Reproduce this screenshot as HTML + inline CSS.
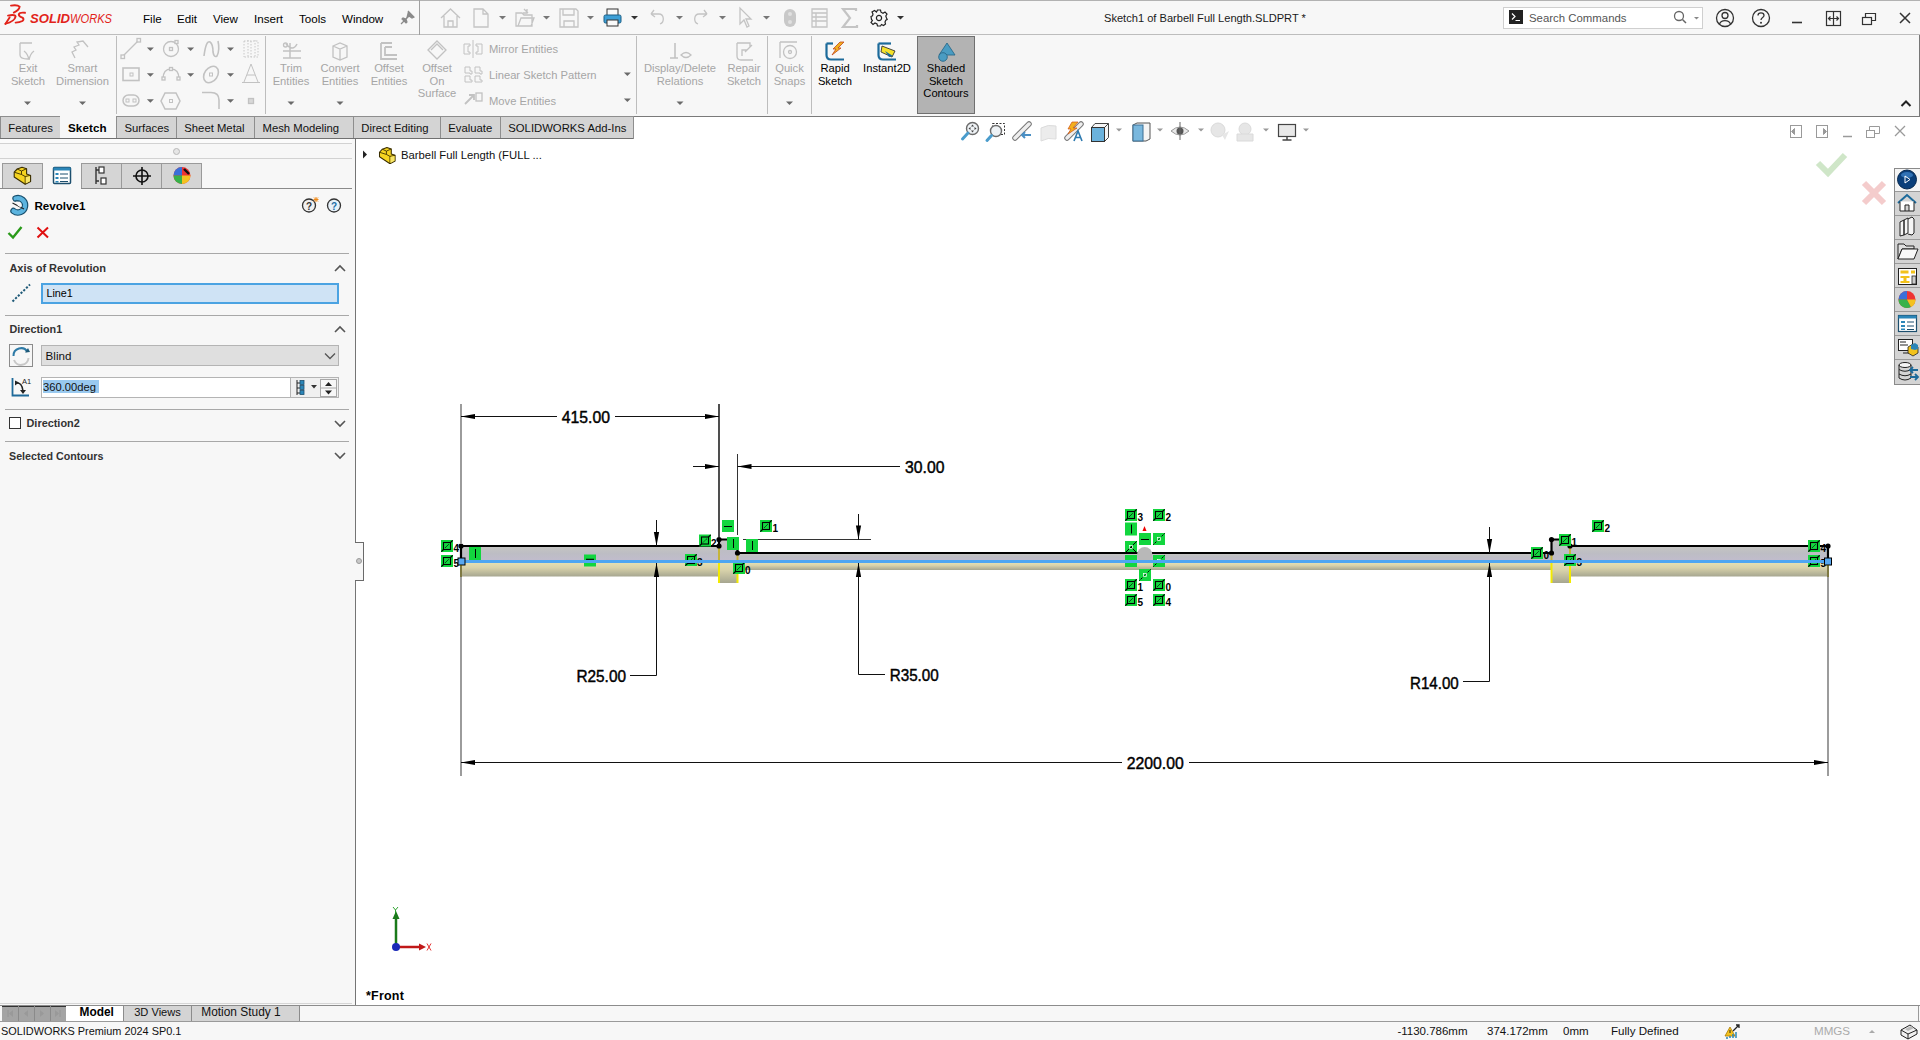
<!DOCTYPE html>
<html><head><meta charset="utf-8">
<style>
*{box-sizing:border-box;margin:0;padding:0}
html,body{width:1920px;height:1040px;overflow:hidden;background:#f7f7f7;font-family:"Liberation Sans",sans-serif;color:#1a1a1a}
.a{position:absolute}
.t{position:absolute;white-space:nowrap;line-height:1;font-size:11.2px}
.dis{color:#a8a8a8}
.ln{position:absolute;background:#c8c8c8}
</style></head><body>
<!-- TITLE BAR -->
<div class="a" style="left:0;top:0;width:1920px;height:35px;background:#f7f7f7;border-top:1px solid #b2b2b2;border-bottom:1px solid #bdbdbd"></div>

<!-- logo -->
<svg class="a" style="left:0;top:0" width="116" height="34" viewBox="0 0 116 34">
 <g fill="none" stroke="#e2231a" stroke-width="1.9" stroke-linecap="round">
  <path d="M11 5.6 Q17.5 4.6 19.6 6.6 Q19.2 10 13.8 12.6"/>
  <path d="M8 15.6 Q15 14 15.6 16.6 Q14.5 21.5 5.5 23.6"/>
  <path d="M9.6 17.4 L5.4 24"/>
  <path d="M25 12.8 Q19.5 12.2 18.8 14.4 Q18.8 16.4 22.4 17.6 Q24.6 19 22.4 21 Q19.5 22.6 15.6 22.6"/>
 </g>
 <text x="30" y="23" font-family="Liberation Sans" font-weight="bold" font-style="italic" font-size="12.6" fill="#e2231a" textLength="40" lengthAdjust="spacingAndGlyphs">SOLID</text>
 <text x="70" y="23" font-family="Liberation Sans" font-style="italic" font-size="12.6" fill="#e2231a" textLength="42" lengthAdjust="spacingAndGlyphs">WORKS</text>
</svg>
<div class="t" style="left:143px;top:13px;font-size:11.6px;color:#000">File</div>
<div class="t" style="left:177px;top:13px;font-size:11.6px;color:#000">Edit</div>
<div class="t" style="left:213px;top:13px;font-size:11.6px;color:#000">View</div>
<div class="t" style="left:254px;top:13px;font-size:11.6px;color:#000">Insert</div>
<div class="t" style="left:299px;top:13px;font-size:11.6px;color:#000">Tools</div>
<div class="t" style="left:342px;top:13px;font-size:11.6px;color:#000">Window</div>
<svg class="a" style="left:400px;top:10px" width="15" height="15" viewBox="0 0 15 15"><path d="M8 1 L14 7 L12 8 L9 6 L6 9 L7 12 L6 13 L2 9 L3 8 L6 9 M4 11 L1 14" fill="#8a8a8a" stroke="#8a8a8a" stroke-width="1.2"/></svg>
<div class="ln" style="left:419px;top:0px;width:1px;height:35px;background:#a0a0a0"></div>
<!-- quick access -->
<svg class="a" style="left:430px;top:2px" width="480" height="32" viewBox="430 2 480 32">
 <g fill="none" stroke="#c4c4c4" stroke-width="1.3">
  <path d="M441 18 L450.5 9 L460 18 M444 16 V27 H457 V16 M448 27 V21 H453 V27"/>
  <path d="M474 9 H483 L488 14 V27 H474 Z M483 9 V14 H488"/>
  <path d="M516 13 H522 L524 15 H532 V26 H516 Z M518 26 L521 18 H534 L531 26"/>
  <path d="M524 9 L528 13 M527 9 V13 H523"/>
  <path d="M560 9 H576 L578 11 V27 H560 Z M563 9 V15 H574 V9 M564 27 V21 H574 V27"/>
  <path d="M651 14 L654 10 M651 14 L655 17 M651 14 H659 C664 14 665 22 660 24"/>
  <path d="M707 14 L704 10 M707 14 L703 17 M707 14 H699 C694 14 693 22 698 24"/>
  <path d="M740 8 V24 L744 20 L747 27 L749 26 L746 19 L751 19 Z"/>
  <path d="M812 9 H827 V27 H812 Z M812 13 H827 M816 13 V27 M812 17 H827 M812 21 H827"/>
 </g>
 <rect x="784" y="9" width="12" height="18" rx="6" fill="#c8c8c8"/>
 <circle cx="790" cy="14" r="2" fill="#e0e0e0"/><circle cx="790" cy="22" r="2" fill="#e0e0e0"/>
 <path d="M856 11 V9 H843 L850 18 L843 27 H857 V25" fill="none" stroke="#c4c4c4" stroke-width="2.2"/>
 <!-- printer -->
 <rect x="607" y="9" width="11" height="7" fill="#fafafa" stroke="#333" stroke-width="1"/>
 <rect x="604" y="15" width="17" height="8" rx="1.5" fill="#3d9fd6" stroke="#1b5f86" stroke-width="1"/>
 <rect x="607" y="20" width="11" height="6" fill="#fafafa" stroke="#333" stroke-width="1"/>
 <!-- gear -->
 <g transform="translate(879 18)" fill="none" stroke="#222" stroke-width="1.2">
  <path d="M-1.5 -8 H1.5 L2 -5.8 L4 -4.8 L6 -6 L8 -4 L6.8 -2 L7.5 0 L8.2 1.5 L6.8 2.2 L6 4 L6.5 6 L4.5 7.5 L2.5 6.5 L1.5 8 H-1.5 L-2 6 L-4 5 L-6 6.5 L-8 4.5 L-6.6 2.5 L-7.5 1.5 L-8 -1.5 L-6.5 -2.2 L-6 -4 L-7 -6 L-4.5 -7.5 L-2.5 -6 Z"/>
  <circle r="2.6"/>
 </g>
 <g fill="#777">
  <path d="M499 16 H506 L502.5 19.5 Z"/><path d="M543 16 H550 L546.5 19.5 Z"/><path d="M587 16 H594 L590.5 19.5 Z"/>
  <path d="M676 16 H683 L679.5 19.5 Z"/><path d="M719 16 H726 L722.5 19.5 Z"/><path d="M763 16 H770 L766.5 19.5 Z"/>
 </g>
 <g fill="#333"><path d="M631 16 H638 L634.5 19.5 Z"/><path d="M897 16 H904 L900.5 19.5 Z"/></g>
</svg>
<div class="t" style="left:1104px;top:13px;font-size:11.1px">Sketch1 of Barbell Full Length.SLDPRT *</div>
<!-- search -->
<div class="a" style="left:1503px;top:7px;width:200px;height:22px;background:#fff;border:1px solid #cfcfcf"></div>
<div class="a" style="left:1509px;top:10px;width:14px;height:14px;background:#222"></div>
<svg class="a" style="left:1509px;top:10px" width="14" height="14"><path d="M3 3.5 L6 6.5 L3 9.5 M6.5 10.5 H11" stroke="#fff" stroke-width="1.2" fill="none"/></svg>
<div class="t" style="left:1529px;top:13px;font-size:11.4px;color:#555">Search Commands</div>
<svg class="a" style="left:1672px;top:9px" width="30" height="18"><circle cx="7" cy="7" r="4.5" fill="none" stroke="#666" stroke-width="1.3"/><path d="M10.5 10.5 L14 14" stroke="#666" stroke-width="1.5"/><path d="M22 8 H27 L24.5 10.5 Z" fill="#888"/></svg>
<svg class="a" style="left:1712px;top:6px" width="210" height="24" viewBox="1712 6 210 24">
 <g fill="none" stroke="#333" stroke-width="1.3">
  <circle cx="1725" cy="18" r="8.5"/><circle cx="1725" cy="15.5" r="3"/><path d="M1719.5 24 C1721 19.5 1729 19.5 1730.5 24"/>
  <circle cx="1761" cy="18" r="8.5"/>
  <path d="M1758 15.5 C1758 12 1764 12 1764 15.5 C1764 17.5 1761 17.5 1761 20"/>
 </g>
 <circle cx="1761" cy="22.8" r="1" fill="#333"/>
 <path d="M1792 22.5 H1802" stroke="#333" stroke-width="1.6"/>
 <g fill="none" stroke="#333" stroke-width="1.2">
  <rect x="1826.5" y="11.5" width="14" height="14"/><path d="M1833.5 11.5 V25.5 M1828.5 18.5 H1838.5 M1830.5 16.5 L1828.5 18.5 L1830.5 20.5 M1836.5 16.5 L1838.5 18.5 L1836.5 20.5"/>
  <rect x="1862.5" y="17.5" width="9" height="7"/><path d="M1865.5 17.5 V13.5 H1875.5 V20.5 H1871.5"/>
  <path d="M1900 13 L1910 23 M1910 13 L1900 23" stroke-width="1.5"/>
 </g>
</svg>

<!-- RIBBON -->
<div class="a" style="left:0;top:35px;width:1920px;height:81px;background:#f7f7f7;border-right:1px solid #777"></div>
<!-- ribbon content -->
<div class="t" style="left:-72.0px;width:200px;text-align:center;top:63px;font-size:11.2px;color:#a6a6a6">Exit</div>
<div class="t" style="left:-72.0px;width:200px;text-align:center;top:76px;font-size:11.2px;color:#a6a6a6">Sketch</div>
<div class="t" style="left:-17.5px;width:200px;text-align:center;top:63px;font-size:11.2px;color:#a6a6a6">Smart</div>
<div class="t" style="left:-17.5px;width:200px;text-align:center;top:76px;font-size:11.2px;color:#a6a6a6">Dimension</div>
<div class="t" style="left:191.0px;width:200px;text-align:center;top:63px;font-size:11.2px;color:#a6a6a6">Trim</div>
<div class="t" style="left:191.0px;width:200px;text-align:center;top:76px;font-size:11.2px;color:#a6a6a6">Entities</div>
<div class="t" style="left:240.0px;width:200px;text-align:center;top:63px;font-size:11.2px;color:#a6a6a6">Convert</div>
<div class="t" style="left:240.0px;width:200px;text-align:center;top:76px;font-size:11.2px;color:#a6a6a6">Entities</div>
<div class="t" style="left:289.0px;width:200px;text-align:center;top:63px;font-size:11.2px;color:#a6a6a6">Offset</div>
<div class="t" style="left:289.0px;width:200px;text-align:center;top:76px;font-size:11.2px;color:#a6a6a6">Entities</div>
<div class="t" style="left:337.0px;width:200px;text-align:center;top:63px;font-size:11.2px;color:#a6a6a6">Offset</div>
<div class="t" style="left:337.0px;width:200px;text-align:center;top:76px;font-size:11.2px;color:#a6a6a6">On</div>
<div class="t" style="left:337.0px;width:200px;text-align:center;top:88px;font-size:11.2px;color:#a6a6a6">Surface</div>
<div class="t" style="left:580.0px;width:200px;text-align:center;top:63px;font-size:11.2px;color:#a6a6a6">Display/Delete</div>
<div class="t" style="left:580.0px;width:200px;text-align:center;top:76px;font-size:11.2px;color:#a6a6a6">Relations</div>
<div class="t" style="left:644.0px;width:200px;text-align:center;top:63px;font-size:11.2px;color:#a6a6a6">Repair</div>
<div class="t" style="left:644.0px;width:200px;text-align:center;top:76px;font-size:11.2px;color:#a6a6a6">Sketch</div>
<div class="t" style="left:689.5px;width:200px;text-align:center;top:63px;font-size:11.2px;color:#a6a6a6">Quick</div>
<div class="t" style="left:689.5px;width:200px;text-align:center;top:76px;font-size:11.2px;color:#a6a6a6">Snaps</div>
<div class="a" style="left:917px;top:36px;width:58px;height:78px;background:#b3b3b3;border:1px solid #707070"></div>
<div class="t" style="left:735.0px;width:200px;text-align:center;top:63px;font-size:11.2px;color:#000">Rapid</div>
<div class="t" style="left:735.0px;width:200px;text-align:center;top:76px;font-size:11.2px;color:#000">Sketch</div>
<div class="t" style="left:787.0px;width:200px;text-align:center;top:63px;font-size:11.2px;color:#000">Instant2D</div>
<div class="t" style="left:846.0px;width:200px;text-align:center;top:63px;font-size:11.2px;color:#000">Shaded</div>
<div class="t" style="left:846.0px;width:200px;text-align:center;top:76px;font-size:11.2px;color:#000">Sketch</div>
<div class="t" style="left:846.0px;width:200px;text-align:center;top:88px;font-size:11.2px;color:#000">Contours</div>
<div class="t" style="left:489px;top:44px;font-size:11.2px;color:#a6a6a6">Mirror Entities</div>
<div class="t" style="left:489px;top:70px;font-size:11.2px;color:#a6a6a6">Linear Sketch Pattern</div>
<div class="t" style="left:489px;top:96px;font-size:11.2px;color:#a6a6a6">Move Entities</div>
<div class="ln" style="left:116px;top:36px;width:1px;height:78px;background:#bdbdbd"></div>
<div class="ln" style="left:265px;top:36px;width:1px;height:78px;background:#bdbdbd"></div>
<div class="ln" style="left:636px;top:36px;width:1px;height:78px;background:#bdbdbd"></div>
<div class="ln" style="left:767px;top:36px;width:1px;height:78px;background:#bdbdbd"></div>
<div class="ln" style="left:811px;top:36px;width:1px;height:78px;background:#bdbdbd"></div>
<svg class="a" style="left:0;top:35px" width="1920" height="81" viewBox="0 35 1920 81">
<g fill="#6a6a6a"><path d="M24.0 101.5 H31.0 L27.5 105 Z"/><path d="M79.0 101.5 H86.0 L82.5 105 Z"/><path d="M287.5 101.5 H294.5 L291 105 Z"/><path d="M336.5 101.5 H343.5 L340 105 Z"/><path d="M676.5 101.5 H683.5 L680 105 Z"/><path d="M786.0 101.5 H793.0 L789.5 105 Z"/><path d="M146.9 47.4 H153.9 L150.4 50.9 Z"/><path d="M187.1 47.4 H194.1 L190.6 50.9 Z"/><path d="M227.0 47.4 H234.0 L230.5 50.9 Z"/><path d="M146.9 73.2 H153.9 L150.4 76.7 Z"/><path d="M187.1 73.2 H194.1 L190.6 76.7 Z"/><path d="M227.0 73.2 H234.0 L230.5 76.7 Z"/><path d="M146.9 99.3 H153.9 L150.4 102.8 Z"/><path d="M227.0 99.3 H234.0 L230.5 102.8 Z"/><path d="M623.9 72.5 H630.9 L627.4 76 Z"/><path d="M623.9 98.5 H630.9 L627.4 102 Z"/></g>
<g fill="none" stroke="#c2c2c2" stroke-width="1.3">
 <path d="M20 43 H32 M20 43 V55 Q20 59 28 59 M24 51 Q28 54 29 60 Q30 54 34 51"/>
 <path d="M75 58 L72 52 L76 50 L74 47 L79 45 L77 42 L83 41 L88 47"/>
 <path d="M122 57 L139 40"/><rect x="121" y="55" width="3.5" height="3.5" fill="#f7f7f7"/><rect x="137" y="38.5" width="3.5" height="3.5" fill="#f7f7f7"/>
 <circle cx="171" cy="49" r="7.5"/><rect x="169.5" y="47.5" width="3" height="3"/><rect x="175" y="40.5" width="3" height="3" fill="#f7f7f7"/>
 <path d="M204 56 Q206 40 210 42 Q213 44 213 52 Q214 58 217 56 Q220 50 218 41" stroke-width="1.6"/>
 <path d="M244 41 V57 M248 40 V57 M251 41 V57 M255 40 V57 M244 41 H258 V57 H244" stroke-dasharray="1.5 1.5" stroke-width="0.9"/>
 <rect x="123" y="68" width="16" height="12.5" stroke-width="1.6"/><rect x="130" y="73" width="3" height="3" stroke-width="1"/>
 <path d="M163 79 Q163 69 171 69 Q179 69 179 79"/><rect x="162" y="77" width="3" height="3" fill="#f7f7f7"/><rect x="169.5" y="67.5" width="3" height="3" fill="#f7f7f7"/><rect x="177" y="77" width="3" height="3" fill="#f7f7f7"/>
 <ellipse cx="211" cy="74.5" rx="6.5" ry="9" transform="rotate(35 211 74.5)" stroke-width="1.6"/><rect x="209.5" y="73" width="3" height="3" stroke-width="1"/>
 <path d="M244 82 L251 64 L258 82 M247 75 H255 M242 82.5 H260" stroke-width="1"/>
 <rect x="123" y="95" width="16" height="11" rx="5.5" stroke-width="1.5"/><rect x="126" y="99" width="3" height="3" stroke-width="1"/><rect x="133" y="99" width="3" height="3" stroke-width="1"/>
 <path d="M165 93 H176 L180 101 L176 109 H165 L161 101 Z" stroke-width="1.5"/><rect x="169.5" y="99.5" width="3" height="3" stroke-width="1"/>
 <path d="M202 92.5 H211 Q219 92.5 219 100 V109" stroke-width="1.6"/>
 <rect x="248.5" y="98.5" width="5" height="5" fill="#d8d8d8"/>
 <path d="M283 58 H301 M290 43 V58 M283 51 H301 M286 44 Q293 52 297 44" stroke-width="1.5"/><circle cx="285.5" cy="45" r="2"/>
 <path d="M333 46 L340 43 L347 46 V57 L340 60 L333 57 Z M333 46 L340 49 L347 46 M340 49 V60"/>
 <path d="M381 43 H392 M381 43 V59 H397 M385 47 H392 M385 47 V55 H397" stroke-width="1.8"/>
 <path d="M428 50 L437 41 L446 50 L437 59 Z M431 50 L437 44 L443 50"/>
 <path d="M464 44 V54 H470 V52 H468 V46 H470 V44 Z M473 40 V58 M476 44 H482 V54 H476 V52 H478 V46 H476 Z" stroke-width="1"/>
 <path d="M465 67 H470 V71 H472 V74 H470 V73 H465 Z M475 67 H480 V71 H482 V74 H480 V73 H475 Z M465 76 H470 V80 H472 V82 H470 V82 H465 Z M475 76 H480 V80 H482 V82 H475 Z" stroke-width="1"/>
 <path d="M465 104 L474 95 M469 95 H474 V100" stroke-width="1.8"/><rect x="476" y="93" width="6" height="8"/>
 <path d="M675 43 V58 M670 58 H678" stroke-width="1.6"/><path d="M681 55 Q686 50 691 55 Q686 60 681 55 Z"/>
 <path d="M737 43 H750 V47 M737 43 V56 Q737 60 741 60 H753 M742 56 V50 H747 M745 52 L752 45"/>
 <path d="M780 42 V58 M780 42 H797"/><circle cx="790" cy="52" r="6.5"/><circle cx="790" cy="52" r="1.5"/>
</g>
<g>
 <path d="M826.5 43.5 V55 Q826.5 59.5 831 59.5 H844" fill="none" stroke="#1c6a9a" stroke-width="2.2"/>
 <path d="M826.5 43.5 H833" fill="none" stroke="#1c6a9a" stroke-width="2.2"/>
 <path d="M840 42 L844 42 L838 48 L841 48 L832 55 L836 49 L833 49 Z" fill="#f2b01e" stroke="#c0461b" stroke-width="0.8"/>
 <path d="M878.5 43.5 V55 Q878.5 59.5 883 59.5 H896" fill="none" stroke="#1c6a9a" stroke-width="2.2"/>
 <path d="M878.5 43.5 H891" fill="none" stroke="#1c6a9a" stroke-width="2.2"/>
 <path d="M882 46 L895 51 L892 57 L881 52 Z" fill="#f5e22a" stroke="#333" stroke-width="0.9"/>
 <path d="M885 51 L893 56 L889 57 Z" fill="#1c6a9a"/>
 <path d="M947 43 L955 55 H939 Z" fill="#4a9cc2" stroke="#2a6a8a" stroke-width="0.9"/>
 <circle cx="943" cy="57" r="4.3" fill="#4a9cc2" stroke="#2a6a8a" stroke-width="0.9"/>
</g>
<path d="M1901.5 106 L1906 101.5 L1910.5 106" fill="none" stroke="#222" stroke-width="2"/>
</svg>
<!-- TABS -->
<div class="a" style="left:0;top:116px;width:1920px;height:23px;background:#fff"></div>
<!-- tabs content -->
<div class="a" style="left:0;top:116px;width:1920px;height:1px;background:#7a7a7a"></div>
<div class="a" style="left:0px;top:116px;width:60.5px;height:23px;background:#d4d4d4;border:1px solid #8e8e8e;border-bottom:none"></div>
<div class="t" style="left:8.3px;top:123px;font-size:11.3px;color:#111">Features</div>
<div class="a" style="left:59.5px;top:116px;width:56.0px;height:23px;background:#f7f7f7"></div>
<div class="t" style="left:68px;top:122px;font-size:11.6px;font-weight:bold;color:#000;letter-spacing:0.1px">Sketch</div>
<div class="a" style="left:115.5px;top:116px;width:61.0px;height:23px;background:#d4d4d4;border:1px solid #8e8e8e;border-bottom:none"></div>
<div class="t" style="left:124.5px;top:123px;font-size:11.3px;color:#111">Surfaces</div>
<div class="a" style="left:175.5px;top:116px;width:79.0px;height:23px;background:#d4d4d4;border:1px solid #8e8e8e;border-bottom:none"></div>
<div class="t" style="left:184.3px;top:123px;font-size:11.3px;color:#111">Sheet Metal</div>
<div class="a" style="left:253.5px;top:116px;width:100.0px;height:23px;background:#d4d4d4;border:1px solid #8e8e8e;border-bottom:none"></div>
<div class="t" style="left:262.5px;top:123px;font-size:11.3px;color:#111">Mesh Modeling</div>
<div class="a" style="left:352.5px;top:116px;width:88.0px;height:23px;background:#d4d4d4;border:1px solid #8e8e8e;border-bottom:none"></div>
<div class="t" style="left:361.3px;top:123px;font-size:11.3px;color:#111">Direct Editing</div>
<div class="a" style="left:439.5px;top:116px;width:61.0px;height:23px;background:#d4d4d4;border:1px solid #8e8e8e;border-bottom:none"></div>
<div class="t" style="left:448.3px;top:123px;font-size:11.3px;color:#111">Evaluate</div>
<div class="a" style="left:499.5px;top:116px;width:134.0px;height:23px;background:#d4d4d4;border:1px solid #8e8e8e;border-bottom:none"></div>
<div class="t" style="left:508.3px;top:123px;font-size:11.3px;color:#111">SOLIDWORKS Add-Ins</div>
<div class="a" style="left:0;top:138px;width:633px;height:1px;background:#707070"></div>
<!-- PANEL -->
<div class="a" style="left:0;top:139px;width:356px;height:866px;background:#f7f7f7;border-right:1px solid #a0a0a0"></div>
<!-- panel content -->
<div class="a" style="left:0;top:139px;width:352px;height:4px;background:#fbfbfb"></div>
<div class="a" style="left:0;top:143px;width:352px;height:1px;background:#d2d2d2"></div>
<div class="a" style="left:172.5px;top:147.5px;width:7px;height:7px;border-radius:50%;background:#e6e6e6;border:1px solid #b8b8b8"></div>
<div class="a" style="left:0;top:158px;width:352px;height:1px;background:#d2d2d2"></div>
<div class="a" style="left:2px;top:163px;width:41px;height:26px;background:#d5d5d5;border:1px solid #9a9a9a;border-bottom:none"></div>
<div class="a" style="left:81px;top:163px;width:41px;height:26px;background:#d5d5d5;border:1px solid #9a9a9a;border-bottom:none"></div>
<div class="a" style="left:121px;top:163px;width:41px;height:26px;background:#d5d5d5;border:1px solid #9a9a9a;border-bottom:none"></div>
<div class="a" style="left:161px;top:163px;width:41px;height:26px;background:#d5d5d5;border:1px solid #9a9a9a;border-bottom:none"></div>
<div class="a" style="left:0;top:188px;width:42px;height:1px;background:#8a8a8a"></div>
<div class="a" style="left:81px;top:188px;width:271px;height:1px;background:#8a8a8a"></div>
<svg class="a" style="left:0;top:160px" width="210" height="30" viewBox="0 160 210 30">
 <g transform="translate(14.2 167.2) scale(1)"><path d="M0 5 L3 1.8 L7.8 0 L12.4 1.5 V6.9 L16.4 8.2 V14.2 L11 17.1 L0 9.8 Z" fill="#f5d420" stroke="#3a2e00" stroke-width="1.1" stroke-linejoin="round"/><path d="M3 1.8 L7.3 3.8 L12.4 1.5 M7.3 3.8 V7.3 L11 9.3 L16.4 8.2 M11 9.3 V17.1 M0 5 L7.3 7.3" fill="none" stroke="#3a2e00" stroke-width="0.9"/><path d="M11.6 10 L15.8 9 V14 L11.6 16.2 Z" fill="#f8e66a"/></g>
 <rect x="53.5" y="167.5" width="17" height="16" rx="1" fill="#fff" stroke="#1d4f6e" stroke-width="1.5"/>
 <rect x="53.5" y="167.5" width="17" height="3" fill="#2b86b8"/>
 <rect x="55.5" y="173" width="3" height="2" fill="#2b86b8"/><rect x="55.5" y="177" width="3" height="2" fill="#2b86b8"/><rect x="55.5" y="181" width="3" height="1.5" fill="#2b86b8"/>
 <path d="M60 174 H68 M60 178 H68 M60 181.5 H68" stroke="#1d4f6e" stroke-width="1"/>
 <path d="M96 167 V184 M96 170 H99 M96 181 H99" stroke="#333" stroke-width="1.4" fill="none"/>
 <rect x="99" y="167" width="5" height="6" fill="#fff" stroke="#333" stroke-width="1.2"/><rect x="101" y="178" width="5" height="6" fill="#fff" stroke="#333" stroke-width="1.2"/>
 <circle cx="142" cy="176" r="6" fill="none" stroke="#111" stroke-width="1.6"/>
 <path d="M142 167 V185 M133 176 H151" stroke="#111" stroke-width="1.6"/>
 <circle cx="182" cy="175.5" r="8.5" fill="#e33"/>
 <path d="M182 175.5 L173.5 175.5 A8.5 8.5 0 0 1 182 167 Z" fill="#3a6fd8"/>
 <path d="M182 175.5 L173.5 175.5 A8.5 8.5 0 0 0 182 184 Z" fill="#37b24a"/>
 <path d="M182 175.5 L182 184 A8.5 8.5 0 0 0 190.5 175.5 Z" fill="#f3c21f"/>
 <path d="M184 169 L189 174" stroke="#111" stroke-width="2.4"/>
</svg>
<svg class="a" style="left:8px;top:193px" width="24" height="24" viewBox="8 193 24 24">
 <path d="M15.5 198.5 A7.2 7.2 0 1 1 13.5 211" fill="none" stroke="#18506e" stroke-width="6.4" stroke-linecap="round"/>
 <path d="M15.5 198.5 A7.2 7.2 0 1 1 13.5 211" fill="none" stroke="#5cb4df" stroke-width="4.2" stroke-linecap="round"/>
 <path d="M14.5 201 Q17 199.5 18.5 201.5" fill="none" stroke="#18506e" stroke-width="0.8"/>
 <path d="M12.5 203 L24 209" stroke="#222" stroke-width="1.1"/>
 <path d="M17.5 205 L21 207" stroke="#fff" stroke-width="1"/>
</svg>
<div class="t" style="left:34.5px;top:200px;font-size:11.6px;color:#000;font-weight:bold">Revolve1</div>
<svg class="a" style="left:298px;top:195px" width="50" height="22" viewBox="298 195 50 22">
 <circle cx="309" cy="205.5" r="6.5" fill="#f0f0f0" stroke="#333" stroke-width="1.3"/>
 <text x="309" y="209.5" text-anchor="middle" font-family="Liberation Sans" font-weight="bold" font-size="10" fill="#333">?</text>
 <path d="M316 197 V202 M313.5 199.5 H318.5 M314 197.5 L318 201.5 M318 197.5 L314 201.5" stroke="#f08a1a" stroke-width="1"/>
 <circle cx="334" cy="205.5" r="6.5" fill="#e8f2fa" stroke="#333" stroke-width="1.3"/>
 <text x="334" y="209.5" text-anchor="middle" font-family="Liberation Sans" font-weight="bold" font-size="10" fill="#1d6fa8">?</text>
</svg>
<svg class="a" style="left:6px;top:222px" width="50" height="20" viewBox="6 222 50 20">
 <path d="M8.5 233 L13 237.5 L21.5 227" fill="none" stroke="#2a9a1a" stroke-width="2.4"/>
 <path d="M37.5 227.5 L48 237.5 M48 227.5 L37.5 237.5" stroke="#e01010" stroke-width="2"/>
</svg>
<div class="a" style="left:5px;top:253px;width:344px;height:1px;background:#a8a8a8"></div>
<div class="a" style="left:5px;top:315px;width:344px;height:1px;background:#a8a8a8"></div>
<div class="a" style="left:5px;top:409px;width:344px;height:1px;background:#a8a8a8"></div>
<div class="a" style="left:5px;top:441px;width:344px;height:1px;background:#a8a8a8"></div>
<div class="t" style="left:9.4px;top:263px;font-size:11px;color:#333;font-weight:bold">Axis of Revolution</div>
<div class="t" style="left:9.4px;top:324px;font-size:10.8px;color:#333;font-weight:bold">Direction1</div>
<div class="t" style="left:26.5px;top:418px;font-size:10.9px;color:#333;font-weight:bold">Direction2</div>
<div class="t" style="left:9px;top:451px;font-size:10.7px;color:#333;font-weight:bold">Selected Contours</div>
<svg class="a" style="left:330px;top:260px" width="20" height="205" viewBox="330 260 20 205">
 <g fill="none" stroke="#555" stroke-width="1.6">
  <path d="M335 271 L340 266 L345 271"/><path d="M335 332 L340 327 L345 332"/>
  <path d="M335 421 L340 426 L345 421"/><path d="M335 453 L340 458 L345 453"/>
 </g>
</svg>
<svg class="a" style="left:10px;top:282px" width="24" height="24" viewBox="10 282 24 24">
 <path d="M12.5 301.5 L30 284.5" stroke="#1f5a78" stroke-width="2" stroke-dasharray="2.2 1.6"/>
</svg>
<div class="a" style="left:41px;top:283px;width:298px;height:21px;background:#cfe3f5;border:2px solid #4ba3e2"></div>
<div class="t" style="left:46.4px;top:288px;font-size:10.8px;color:#000;">Line1</div>
<div class="a" style="left:9px;top:343.5px;width:24px;height:23px;background:#f7f7f7;border:1px solid #8c8c8c"></div>
<svg class="a" style="left:9px;top:343px" width="24" height="24" viewBox="9 343 24 24">
 <path d="M13.5 356 A7.5 7.5 0 0 1 27.5 352" fill="none" stroke="#2d7aa6" stroke-width="2"/>
 <path d="M25 352.5 L30 352 L28 348 Z" fill="#1f5a78"/>
 <path d="M28.5 358 A7.5 7.5 0 0 1 14 360" fill="none" stroke="#c8c8c8" stroke-width="2"/>
</svg>
<div class="a" style="left:41px;top:345px;width:298px;height:21px;background:#dfdfdf;border:1px solid #b4b4b4"></div>
<div class="t" style="left:45.6px;top:350px;font-size:11.6px;color:#111;">Blind</div>
<svg class="a" style="left:322px;top:350px" width="16" height="12"><path d="M3 3.5 L8 8.5 L13 3.5" fill="none" stroke="#555" stroke-width="1.3"/></svg>
<svg class="a" style="left:10px;top:375px" width="24" height="24" viewBox="10 375 24 24">
 <path d="M12.5 378 V395.5 H29" fill="none" stroke="#1f6a9a" stroke-width="1.8"/>
 <path d="M16 383 Q22 382 23 391" fill="none" stroke="#222" stroke-width="1.5"/>
 <path d="M15 380.5 L15 385.5 L19 382.5 Z M20 390 L26 390 L23 394 Z" fill="#222"/>
 <text x="22" y="384" font-family="Liberation Sans" font-size="7.5" fill="#222">A1</text>
</svg>
<div class="a" style="left:41px;top:377px;width:298px;height:21px;background:#fff;border:1px solid #b4b4b4"></div>
<div class="a" style="left:43px;top:380px;width:56px;height:13px;background:#99c9ef"></div>
<div class="t" style="left:43px;top:382px;font-size:11.2px;color:#111;">360.00deg</div>
<div class="a" style="left:290px;top:378px;width:1px;height:19px;background:#b4b4b4"></div>
<div class="a" style="left:291px;top:378px;width:47px;height:19px;background:#f0f0f0"></div>
<svg class="a" style="left:292px;top:377px" width="48" height="21" viewBox="292 377 48 21">
 <path d="M297 380 V395 M297 383 H300 M297 388 H300 M297 393 H300" stroke="#222" stroke-width="1" fill="none"/>
 <rect x="300" y="380.5" width="4" height="4" fill="#2b86b8" stroke="#1d4f6e" stroke-width="0.8"/>
 <rect x="300" y="385.5" width="4" height="4" fill="#2b86b8" stroke="#1d4f6e" stroke-width="0.8"/>
 <rect x="300" y="390.5" width="4" height="4" fill="#2b86b8" stroke="#1d4f6e" stroke-width="0.8"/>
 <path d="M311 385 H317 L314 388.5 Z" fill="#333"/>
 <rect x="320.5" y="379.5" width="16" height="17" fill="#f7f7f7" stroke="#a8a8a8" stroke-width="1"/>
 <path d="M320.5 388 H336.5" stroke="#a8a8a8" stroke-width="1"/>
 <path d="M325 386 L328.5 382 L332 386 Z M325 390.5 H332 L328.5 394.5 Z" fill="#222"/>
</svg>
<div class="a" style="left:9px;top:417px;width:12px;height:12px;background:#fff;border:1px solid #333"></div>
<!-- VIEWPORT -->
<div class="a" style="left:356px;top:139px;width:1564px;height:866px;background:#fff"></div>
<!-- sketch -->
<svg class="a" style="left:356px;top:139px" width="1564" height="866" viewBox="356 139 1564 866">
<defs>
 <linearGradient id="tan" x1="0" y1="0" x2="0" y2="1">
  <stop offset="0" stop-color="#e4dfb2"/><stop offset="0.35" stop-color="#d8d2aa"/><stop offset="1" stop-color="#a6a690"/>
 </linearGradient>
 <linearGradient id="gry" x1="0" y1="0" x2="0" y2="1">
  <stop offset="0" stop-color="#c4c4c2"/><stop offset="0.5" stop-color="#bdbdc4"/><stop offset="1" stop-color="#c0bccc"/>
 </linearGradient>
 <g id="co"><rect x="0" y="0" width="12" height="12" fill="#12d63e"/><rect x="2.5" y="2.5" width="7" height="7" fill="none" stroke="#000" stroke-width="1.1"/><path d="M0.3 11.7 L2.5 9.5 M9.5 2.5 L11.7 0.3" stroke="#000" stroke-width="1.2"/><path d="M4 8 L8 4" stroke="#000" stroke-width="0.9" stroke-dasharray="1 0.6"/></g>
 <g id="vr"><rect x="0" y="0" width="12" height="13" fill="#12d63e"/><path d="M6.5 2 V11" stroke="#000" stroke-width="1"/></g>
 <g id="hr"><rect x="0" y="0" width="12" height="12" fill="#12d63e"/><path d="M2 6.5 H10" stroke="#000" stroke-width="1"/></g>
 <g id="hr2"><rect x="0" y="0" width="12" height="12" fill="#12d63e"/><path d="M2 4.8 H10" stroke="#000" stroke-width="1.1"/></g>
 <g id="md"><rect x="0" y="0" width="12" height="12" fill="#12d63e"/><path d="M11.7 0.3 L0.3 11.7 M6 6 L11.7 11.7 M0.3 11.5 H11.7" stroke="#000" stroke-width="1" fill="none"/><rect x="4.5" y="4.5" width="3" height="3" fill="none" stroke="#fff" stroke-width="0.7"/></g>
 <g id="dg"><rect x="0" y="0" width="12" height="12" fill="#12d63e"/><path d="M0.3 11.7 L11.7 0.3" stroke="#000" stroke-width="1" stroke-dasharray="1.6 0.8"/><rect x="4.5" y="4.5" width="3" height="3" fill="none" stroke="#fff" stroke-width="0.7"/></g>
</defs>
<g>
<rect x="461" y="547" width="258" height="13" fill="url(#gry)"/>
<rect x="461" y="563" width="258" height="13.5" fill="url(#tan)"/>
<rect x="719" y="540" width="18.5" height="20" fill="url(#gry)"/>
<rect x="719" y="563" width="18.5" height="20" fill="url(#tan)"/>
<rect x="737.5" y="554" width="814.0" height="6" fill="url(#gry)"/>
<rect x="737.5" y="563" width="814.0" height="7" fill="url(#tan)"/>
<rect x="1551.5" y="540" width="18.5" height="20" fill="url(#gry)"/>
<rect x="1551.5" y="563" width="18.5" height="20" fill="url(#tan)"/>
<rect x="1570" y="547" width="258" height="13" fill="url(#gry)"/>
<rect x="1570" y="563" width="258" height="13.5" fill="url(#tan)"/>
</g>
<g stroke-width="2">
<path d="M719 547 V560" stroke="#c4b43a"/><path d="M719 563 V583" stroke="#f2ea00"/>
<path d="M737.5 554 V560" stroke="#c4b43a"/><path d="M737.5 563 V583" stroke="#f2ea00"/>
<path d="M1551.5 554 V560" stroke="#c4b43a"/><path d="M1551.5 563 V583" stroke="#f2ea00"/>
<path d="M1570 547 V560" stroke="#c4b43a"/><path d="M1570 563 V583" stroke="#f2ea00"/>
<path d="M461 563 V577" stroke="#b4a820"/><path d="M1828 563 V577" stroke="#b4a820"/>
</g>
<g stroke="#5a5a5a" stroke-width="1.2" fill="none">
<path d="M461 404 V543 M461 566 V776"/>
<path d="M1828 566 V776"/>
<path d="M719 404 V537" stroke="#222" stroke-width="1.6"/>
<path d="M737.5 454 V535" stroke="#333" stroke-width="1"/>
<path d="M743 539.5 H871" stroke="#333" stroke-width="1"/>
</g>
<g stroke="#000" stroke-width="2.2" fill="none" stroke-linejoin="miter">
<path d="M461 561.5 V546 H719 V539.5 H737.5 V553 H1551.5 V539.5 H1570 V546 H1828 V561.5"/>
</g>
<g fill="#000">
<circle cx="461" cy="546" r="2.6"/>
<circle cx="719" cy="539.5" r="2.6"/>
<circle cx="719" cy="546" r="2.6"/>
<circle cx="737.5" cy="553" r="2.6"/>
<circle cx="1551.5" cy="539.5" r="2.6"/>
<circle cx="1551.5" cy="553" r="2.6"/>
<circle cx="1570" cy="546" r="2.6"/>
<circle cx="1828" cy="546" r="2.6"/>
</g>
<g stroke="#111" stroke-width="1" fill="none">
<path d="M461 416.5 H557 M615 416.5 H719"/>
<path d="M693 466.5 H719 M737.5 466.5 H900"/>
<path d="M656.5 520 V546 M656.5 563 V675.5 H630"/>
<path d="M858.5 514 V539.5 M858.5 563 V674.5 H885"/>
<path d="M1489.5 527 V553 M1489.5 563 V681.5 H1463"/>
<path d="M461 762.5 H1122 M1189 762.5 H1828"/>
</g>
<path d="M461 416.5 L475.00 413.90 L475.00 419.10 Z" fill="#000"/><path d="M719 416.5 L705.00 419.10 L705.00 413.90 Z" fill="#000"/>
<path d="M719 466.5 L705.00 469.10 L705.00 463.90 Z" fill="#000"/><path d="M737.5 466.5 L751.50 463.90 L751.50 469.10 Z" fill="#000"/>
<path d="M656.5 546 L653.90 532.00 L659.10 532.00 Z" fill="#000"/><path d="M656.5 563 L659.10 577.00 L653.90 577.00 Z" fill="#000"/>
<path d="M858.5 539.5 L855.90 525.50 L861.10 525.50 Z" fill="#000"/><path d="M858.5 563 L861.10 577.00 L855.90 577.00 Z" fill="#000"/>
<path d="M1489.5 553 L1486.90 539.00 L1492.10 539.00 Z" fill="#000"/><path d="M1489.5 563 L1492.10 577.00 L1486.90 577.00 Z" fill="#000"/>
<path d="M461 762.5 L475.00 759.90 L475.00 765.10 Z" fill="#000"/><path d="M1828 762.5 L1814.00 765.10 L1814.00 759.90 Z" fill="#000"/>
<text x="561.8" y="423.2" font-family="Liberation Sans" font-size="17" fill="#000" stroke="#000" stroke-width="0.45" textLength="48.200000000000045" lengthAdjust="spacingAndGlyphs">415.00</text>
<text x="905" y="472.5" font-family="Liberation Sans" font-size="17" fill="#000" stroke="#000" stroke-width="0.45" textLength="39.39999999999998" lengthAdjust="spacingAndGlyphs">30.00</text>
<text x="576.4" y="681.8" font-family="Liberation Sans" font-size="17" fill="#000" stroke="#000" stroke-width="0.45" textLength="49.60000000000002" lengthAdjust="spacingAndGlyphs">R25.00</text>
<text x="889.7" y="680.6" font-family="Liberation Sans" font-size="17" fill="#000" stroke="#000" stroke-width="0.45" textLength="49.09999999999991" lengthAdjust="spacingAndGlyphs">R35.00</text>
<text x="1410" y="688.5" font-family="Liberation Sans" font-size="17" fill="#000" stroke="#000" stroke-width="0.45" textLength="48.700000000000045" lengthAdjust="spacingAndGlyphs">R14.00</text>
<text x="1126.7" y="768.8" font-family="Liberation Sans" font-size="17" fill="#000" stroke="#000" stroke-width="0.45" textLength="57.09999999999991" lengthAdjust="spacingAndGlyphs">2200.00</text>
<use href="#co" x="441" y="540"/>
<text x="453.5" y="552" font-family="Liberation Sans" font-weight="bold" font-size="10" fill="#000">4</text>
<use href="#co" x="441" y="555"/>
<text x="453.5" y="567" font-family="Liberation Sans" font-weight="bold" font-size="10" fill="#000">5</text>
<use href="#vr" x="469" y="547"/>
<use href="#hr2" x="584" y="554.5"/>
<use href="#co" x="685" y="554"/>
<text x="697" y="566" font-family="Liberation Sans" font-weight="bold" font-size="10" fill="#000">3</text>
<use href="#co" x="699" y="534.5"/>
<text x="711" y="546.5" font-family="Liberation Sans" font-weight="bold" font-size="10" fill="#000">2</text>
<use href="#hr" x="722" y="520"/>
<use href="#vr" x="727" y="537"/>
<use href="#vr" x="746" y="539"/>
<use href="#co" x="760" y="520"/>
<text x="772.5" y="532" font-family="Liberation Sans" font-weight="bold" font-size="10" fill="#000">1</text>
<use href="#co" x="733" y="562"/>
<text x="745" y="573.5" font-family="Liberation Sans" font-weight="bold" font-size="10" fill="#000">0</text>
<circle cx="1144.7" cy="554.7" r="7.6" fill="#b8b8b8"/>
<use href="#co" x="1125" y="509"/>
<text x="1137.5" y="521" font-family="Liberation Sans" font-weight="bold" font-size="10" fill="#000">3</text>
<use href="#co" x="1153" y="509"/>
<text x="1165.5" y="521" font-family="Liberation Sans" font-weight="bold" font-size="10" fill="#000">2</text>
<use href="#vr" x="1125" y="522.5"/>
<use href="#hr" x="1139" y="533"/>
<use href="#dg" x="1153" y="533"/>
<use href="#md" x="1125" y="541"/>
<use href="#hr" x="1125" y="555"/>
<use href="#dg" x="1153" y="555"/>
<use href="#dg" x="1139" y="569"/>
<use href="#co" x="1125" y="579"/>
<text x="1137.5" y="591" font-family="Liberation Sans" font-weight="bold" font-size="10" fill="#000">1</text>
<use href="#co" x="1153" y="579"/>
<text x="1165.5" y="591" font-family="Liberation Sans" font-weight="bold" font-size="10" fill="#000">0</text>
<use href="#co" x="1125" y="594"/>
<text x="1137.5" y="606" font-family="Liberation Sans" font-weight="bold" font-size="10" fill="#000">5</text>
<use href="#co" x="1153" y="594"/>
<text x="1165.5" y="606" font-family="Liberation Sans" font-weight="bold" font-size="10" fill="#000">4</text>
<path d="M1142.5 531 L1144.5 526 L1146.5 531 Z" fill="#e00"/>
<use href="#co" x="1531" y="547"/>
<text x="1543.5" y="559" font-family="Liberation Sans" font-weight="bold" font-size="10" fill="#000">0</text>
<use href="#co" x="1559" y="534"/>
<text x="1571.5" y="546" font-family="Liberation Sans" font-weight="bold" font-size="10" fill="#000">1</text>
<use href="#co" x="1564" y="554"/>
<text x="1576.5" y="566" font-family="Liberation Sans" font-weight="bold" font-size="10" fill="#000">3</text>
<use href="#co" x="1592" y="520"/>
<text x="1604.5" y="532" font-family="Liberation Sans" font-weight="bold" font-size="10" fill="#000">2</text>
<use href="#co" x="1808" y="540"/>
<text x="1820.5" y="552" font-family="Liberation Sans" font-weight="bold" font-size="10" fill="#000">4</text>
<use href="#co" x="1808" y="555"/>
<text x="1820.5" y="567" font-family="Liberation Sans" font-weight="bold" font-size="10" fill="#000">5</text>
<rect x="461" y="560" width="1367" height="3" fill="#4ea6f2"/>
<rect x="458" y="558" width="7" height="7" fill="#58a8f0" stroke="#000" stroke-width="1"/>
<rect x="1824.5" y="558" width="7" height="7" fill="#58a8f0" stroke="#000" stroke-width="1"/>
</svg>
<!-- viewport chrome -->
<div class="a" style="left:355px;top:139px;width:1px;height:866px;background:#757575"></div>
<div class="a" style="left:355px;top:542px;width:9px;height:39px;background:#f7f7f7;border:1px solid #6a6a6a;border-left:none"></div>
<div class="a" style="left:356px;top:558px;width:6px;height:6px;border-radius:50%;background:#c8c8c8;border:1px solid #9a9a9a"></div>
<svg class="a" style="left:360px;top:146px" width="40" height="18" viewBox="360 146 40 18"><path d="M363 150.5 V158.5 L367 154.5 Z" fill="#222"/><g transform="translate(379.5 147.5) scale(0.95)"><path d="M0 5 L3 1.8 L7.8 0 L12.4 1.5 V6.9 L16.4 8.2 V14.2 L11 17.1 L0 9.8 Z" fill="#f5d420" stroke="#3a2e00" stroke-width="1.1" stroke-linejoin="round"/><path d="M3 1.8 L7.3 3.8 L12.4 1.5 M7.3 3.8 V7.3 L11 9.3 L16.4 8.2 M11 9.3 V17.1 M0 5 L7.3 7.3" fill="none" stroke="#3a2e00" stroke-width="0.9"/><path d="M11.6 10 L15.8 9 V14 L11.6 16.2 Z" fill="#f8e66a"/></g></svg>
<div class="t" style="left:401px;top:150px;font-size:11.3px;color:#111;">Barbell Full Length (FULL ...</div>
<svg class="a" style="left:1785px;top:122px" width="125" height="20" viewBox="1785 122 125 20">
 <g fill="none" stroke="#9a9a9a" stroke-width="1">
  <rect x="1790.5" y="125.5" width="11" height="12"/><path d="M1794.5 128.5 V134.5 L1791.5 131.5 Z" fill="#9a9a9a"/>
  <rect x="1816.5" y="125.5" width="11" height="12"/><path d="M1823.5 128.5 V134.5 L1826.5 131.5 Z" fill="#9a9a9a"/>
  <path d="M1843 136.5 H1852" stroke-width="1.5"/>
  <rect x="1866.5" y="130.5" width="8" height="7"/><path d="M1869.5 130.5 V126.5 H1879.5 V133.5 H1874.5"/>
  <path d="M1895 126 L1905 136 M1905 126 L1895 136" stroke-width="1.3"/>
 </g>
</svg>
<svg class="a" style="left:1810px;top:148px" width="84" height="64" viewBox="1810 148 84 64">
 <path d="M1818 163 L1828 173 L1845 155" fill="none" stroke="#cfe6c8" stroke-width="6" stroke-linejoin="miter"/>
 <path d="M1864 183 L1884 203 M1884 183 L1864 203" stroke="#f4cccc" stroke-width="6"/>
</svg>
<div class="a" style="left:1894px;top:168px;width:26px;height:217px;background:#d4d4d4;border-left:1px solid #8a8a8a;border-top:1px solid #8a8a8a;border-bottom:1px solid #8a8a8a"></div>
<div class="a" style="left:1895px;top:169px;width:25px;height:22px;background:#f5f5f5"></div>
<div class="a" style="left:1895px;top:191px;width:25px;height:1px;background:#9a9a9a"></div>
<div class="a" style="left:1895px;top:215px;width:25px;height:1px;background:#9a9a9a"></div>
<div class="a" style="left:1895px;top:239px;width:25px;height:1px;background:#9a9a9a"></div>
<div class="a" style="left:1895px;top:263px;width:25px;height:1px;background:#9a9a9a"></div>
<div class="a" style="left:1895px;top:287px;width:25px;height:1px;background:#9a9a9a"></div>
<div class="a" style="left:1895px;top:311px;width:25px;height:1px;background:#9a9a9a"></div>
<div class="a" style="left:1895px;top:335px;width:25px;height:1px;background:#9a9a9a"></div>
<div class="a" style="left:1895px;top:359px;width:25px;height:1px;background:#9a9a9a"></div>
<svg class="a" style="left:1895px;top:168px" width="25" height="218" viewBox="1895 168 25 218">
 <circle cx="1907" cy="179.5" r="9.5" fill="#0b3f7a" stroke="#06284f" stroke-width="1"/>
 <ellipse cx="1907" cy="175" rx="6" ry="3" fill="#3b7fc4" opacity="0.8"/>
 <path d="M1905 176 V183 L1910 179.5 Z" fill="none" stroke="#fff" stroke-width="1"/>
 <path d="M1898 203 L1907 195 L1916 203" fill="none" stroke="#1c6a9a" stroke-width="2"/>
 <path d="M1900 201.5 V211 H1914 V201.5 M1905 211 V205 H1909 V211" fill="#fff" stroke="#222" stroke-width="1"/>
 <path d="M1900 222 L1904 220 V235 L1900 236 Z M1904 220 L1908 218 V233 L1904 235 Z M1908 219 L1912 217 L1914 219 V233 L1912 235 L1908 234" fill="#f5f5f5" stroke="#222" stroke-width="1"/>
 <path d="M1898 244 H1904 L1906 246 H1914 V249 H1902 L1898 259 Z" fill="#e0e0e0" stroke="#222" stroke-width="1"/>
 <path d="M1902 249 H1918 L1914 259 H1898 Z" fill="#f8f8f8" stroke="#222" stroke-width="1"/>
 <rect x="1898.5" y="268.5" width="18" height="16" fill="#fff" stroke="#222" stroke-width="1"/>
 <rect x="1900.5" y="270.5" width="8" height="3" fill="#f2c21a"/><rect x="1911" y="270.5" width="4" height="3" fill="#f2c21a"/>
 <rect x="1900.5" y="276" width="9" height="2" fill="#f2c21a"/><rect x="1903.5" y="278" width="3" height="3" fill="#f2c21a"/><rect x="1900.5" y="281" width="9" height="2" fill="#f2c21a"/>
 <rect x="1912" y="276" width="4" height="8" fill="#ccc" stroke="#222" stroke-width="0.8"/>
 <circle cx="1907" cy="299.5" r="8.5" fill="#e33"/>
 <path d="M1907 299.5 L1898.5 299.5 A8.5 8.5 0 0 1 1907 291 Z" fill="#3a6fd8"/>
 <path d="M1907 299.5 L1898.5 299.5 A8.5 8.5 0 0 0 1911 307 Z" fill="#37b24a"/>
 <path d="M1907 299.5 L1911 307 A8.5 8.5 0 0 0 1915.5 299.5 Z" fill="#f3c21f"/>
 <rect x="1898.5" y="315.5" width="18" height="16" fill="#fff" stroke="#1d4f6e" stroke-width="1.2"/>
 <rect x="1898.5" y="315.5" width="18" height="3" fill="#2b86b8"/>
 <rect x="1901" y="321" width="4" height="2" fill="#2b86b8"/><rect x="1901" y="325" width="4" height="2" fill="#2b86b8"/><rect x="1901" y="328.5" width="4" height="1.5" fill="#2b86b8"/>
 <path d="M1907 322 H1914 M1907 326 H1914 M1907 329.5 H1914" stroke="#1d4f6e" stroke-width="1"/>
 <rect x="1898.5" y="339.5" width="14" height="11" fill="#fff" stroke="#222" stroke-width="1"/>
 <path d="M1900 342 H1906 M1900 345 H1908 M1903 353 H1909" stroke="#222" stroke-width="1"/>
 <path d="M1908 347 L1913 344 L1918 347 V353 L1913 356 L1908 353 Z" fill="#f2c21a" stroke="#222" stroke-width="0.8"/>
 <path d="M1911 345 L1915 343 L1918 345 V349 L1915 350 L1911 349 Z" fill="#2b86b8"/>
 <ellipse cx="1905" cy="365" rx="6" ry="2.5" fill="#f5f5f5" stroke="#222" stroke-width="1"/>
 <path d="M1899 365 V378 Q1905 382 1911 378 V365 M1899 369.5 Q1905 373 1911 369.5 M1899 374 Q1905 377.5 1911 374" fill="none" stroke="#222" stroke-width="1"/>
 <path d="M1910 370 H1918 M1913 367 L1910 370 L1913 373 M1910 377 H1918 M1915 374 L1918 377 L1915 380" fill="none" stroke="#1c6a9a" stroke-width="1.8"/>
</svg>
<svg class="a" style="left:955px;top:118px" width="360" height="28" viewBox="955 118 360 28">
 <g>
  <circle cx="972.5" cy="128.5" r="6" fill="#eef2f5" stroke="#6b6b6b" stroke-width="1.4"/>
  <path d="M972.5 124.5 L974 126.5 H971 Z M972.5 132.5 L974 130.5 H971 Z M968.5 128.5 L970.5 127 V130 Z M976.5 128.5 L974.5 127 V130 Z" fill="#444"/>
  <path d="M968 133 L962.5 139" stroke="#4a9ccc" stroke-width="3" stroke-linecap="round"/>
  <rect x="992.5" y="123.5" width="12" height="11" fill="none" stroke="#333" stroke-width="1" stroke-dasharray="2 1.5"/>
  <circle cx="996" cy="131" r="5.5" fill="#eef2f5" stroke="#6b6b6b" stroke-width="1.4"/>
  <path d="M991.5 135.5 L987 140.5" stroke="#4a9ccc" stroke-width="3" stroke-linecap="round"/>
  <path d="M1015 138 L1029 124" stroke="#777" stroke-width="5.5" stroke-linecap="round"/>
  <path d="M1015 138 L1029 124" stroke="#eee" stroke-width="3.5" stroke-linecap="round"/>
  <path d="M1022 135 H1031 M1025 132 L1022 135 L1025 138" fill="none" stroke="#4a8fc4" stroke-width="2"/>
  <path d="M1041 128 Q1048 124 1056 126 V139 Q1048 137 1041 141 Z" fill="#ececec" stroke="#dcdcdc" stroke-width="1"/>
  <path d="M1067 138 L1081 124" stroke="#777" stroke-width="5.5" stroke-linecap="round"/>
  <path d="M1067 138 L1081 124" stroke="#eee" stroke-width="3.5" stroke-linecap="round"/>
  <path d="M1072 122 L1078 122 L1073 128 L1077 128 L1068 134 L1071 129 L1068 129 Z" fill="#f2b01e" stroke="#d05018" stroke-width="0.7"/>
  <path d="M1074 141 L1078 131 L1082 141 M1075.5 137.5 H1080.5" fill="none" stroke="#2d7ab0" stroke-width="1.6"/>
  <path d="M1091.5 127.5 L1095 123.5 H1108.5 V137.5 L1104.5 141.5 H1091.5 Z" fill="#f5f5f5" stroke="#444" stroke-width="1"/>
  <rect x="1091.5" y="127.5" width="13" height="14" fill="#6bb2dc" stroke="#333" stroke-width="1"/>
  <path d="M1104.5 127.5 L1108.5 123.5" stroke="#444" stroke-width="1"/>
  <path d="M1116 128.5 H1122 L1119 131.5 Z" fill="#999"/>
  <path d="M1133 125 L1137 123 H1150 V139 L1146 141 H1133 Z" fill="#f5f5f5" stroke="#555" stroke-width="1"/>
  <rect x="1133" y="125" width="10" height="16" fill="#7ab8de" stroke="#3a6f94" stroke-width="1"/>
  <path d="M1157 128.5 H1163 L1160 131.5 Z" fill="#999"/>
  <path d="M1171 131 Q1180 123 1189 131 Q1180 139 1171 131 Z" fill="#e8e8e8" stroke="#999" stroke-width="1"/>
  <circle cx="1180" cy="131" r="3.5" fill="#555"/><path d="M1180 122 V140" stroke="#666" stroke-width="1"/>
  <path d="M1198 128.5 H1204 L1201 131.5 Z" fill="#999"/>
  <circle cx="1218" cy="130" r="7" fill="#e6e6e6" stroke="#dadada"/>
  <path d="M1222 135 L1229 131 L1225 140 Z" fill="#e6e6e6"/>
  <circle cx="1245" cy="129" r="6" fill="#e6e6e6" stroke="#dadada"/>
  <path d="M1237 134 H1253 V141 H1237 Z" fill="#e6e6e6" stroke="#dadada"/>
  <path d="M1263 128.5 H1269 L1266 131.5 Z" fill="#999"/>
  <rect x="1278.5" y="124.5" width="17" height="12" fill="#e8e8e8" stroke="#444" stroke-width="1.2"/>
  <path d="M1287 136.5 V139.5 M1282.5 140 H1291.5" stroke="#444" stroke-width="1.5"/>
  <path d="M1303 128.5 H1309 L1306 131.5 Z" fill="#999"/>
 </g>
</svg>
<div class="t" style="left:366px;top:990px;font-size:12.5px;color:#000;font-weight:bold;letter-spacing:0.2px">*Front</div>
<svg class="a" style="left:380px;top:900px" width="60" height="60" viewBox="380 900 60 60">
 <path d="M396 947 V918" stroke="#1a7a1a" stroke-width="2.5"/>
 <path d="M392.5 919 L396 911 L399.5 919 Z" fill="#1a7a1a"/>
 <path d="M396 947 H421" stroke="#c01818" stroke-width="2.5"/>
 <path d="M419 943.5 L426 947 L419 950.5 Z" fill="#c01818"/>
 <circle cx="396" cy="947" r="4" fill="#1a2ab8"/>
 <path d="M393 907 L395.5 910 L398 907 M395.5 910 V913" stroke="#1a9a1a" stroke-width="0.9" fill="none"/>
 <path d="M427 943.5 L431 950.5 M431 943.5 L427 950.5" stroke="#e01818" stroke-width="0.9"/>
</svg>
<!-- BOTTOM TABS -->
<div class="a" style="left:0;top:1003px;width:355px;height:3px;background:#f7f7f7"></div>
<div class="a" style="left:0;top:1005px;width:1920px;height:1px;background:#8c8c8c"></div>
<div class="a" style="left:0;top:1006px;width:1920px;height:15px;background:#f7f7f7"></div>
<div class="a" style="left:66px;top:1006px;width:57px;height:15px;background:#fff"></div>
<div class="a" style="left:0;top:1003px;width:352px;height:1px;background:#d6d6d6"></div>
<div class="a" style="left:2px;top:1006px;width:64px;height:15px;background:#a4a4a4;border-top:1px solid #333"></div>
<svg class="a" style="left:2px;top:1006px" width="64" height="15" viewBox="2 1006 64 15">
 <g stroke="#8a8a8a" stroke-width="1"><path d="M18.5 1006 V1021 M34.5 1006 V1021 M50.5 1006 V1021"/></g>
 <g fill="#999"><path d="M8 1010 V1017 M13 1010 L9 1013.5 L13 1017 Z"/><path d="M28 1010 L24 1013.5 L28 1017 Z"/><path d="M40 1010 L44 1013.5 L40 1017 Z"/><path d="M55 1010 L59 1013.5 L55 1017 Z M60 1010 V1017"/></g>
 <path d="M8 1010 V1017 M60 1010 V1017" stroke="#999" stroke-width="1.3"/>
</svg>
<div class="a" style="left:123px;top:1006px;width:69px;height:15px;background:#d4d4d4;border-left:1px solid #8c8c8c;border-right:1px solid #8c8c8c"></div>
<div class="a" style="left:191px;top:1006px;width:109px;height:15px;background:#d4d4d4;border-right:1px solid #8c8c8c;border-left:1px solid #8c8c8c"></div>
<div class="t" style="left:79.5px;top:1007px;font-size:11.9px;color:#000;font-weight:bold">Model</div>
<div class="t" style="left:134.2px;top:1007px;font-size:11.1px;color:#111;">3D Views</div>
<div class="t" style="left:201.3px;top:1007px;font-size:11.9px;color:#111;">Motion Study 1</div>
<div class="a" style="left:0;top:1021px;width:1920px;height:1px;background:#9a9a9a"></div>
<div class="a" style="left:1918px;top:1006px;width:1px;height:15px;background:#9a9a9a"></div>
<!-- STATUS -->
<div class="a" style="left:0;top:1022px;width:1920px;height:18px;background:#f7f7f7"></div>
<div class="t" style="left:1px;top:1026px;font-size:10.9px;color:#111;">SOLIDWORKS Premium 2024 SP0.1</div>
<div class="t" style="left:1397.4px;top:1026px;font-size:11.5px;color:#111;">-1130.786mm</div>
<div class="t" style="left:1487px;top:1026px;font-size:11.5px;color:#111;">374.172mm</div>
<div class="t" style="left:1563px;top:1026px;font-size:11.5px;color:#111;">0mm</div>
<div class="t" style="left:1611px;top:1025px;font-size:11.6px;color:#111;">Fully Defined</div>
<div class="t" style="left:1814px;top:1025px;font-size:11.6px;color:#aaa;">MMGS</div>
<svg class="a" style="left:1720px;top:1022px" width="200" height="18" viewBox="1720 1022 200 18">
 <path d="M1725 1036 L1730 1027 L1735 1036 Z" fill="#f3c21f" stroke="#a87a00" stroke-width="0.8"/>
 <path d="M1730 1030 V1033" stroke="#222" stroke-width="1"/>
 <path d="M1733 1031 L1739 1025 M1736 1025 H1739 V1028" fill="none" stroke="#222" stroke-width="1.3"/>
 <path d="M1726 1038 H1728 M1730 1038 V1036 M1733 1038 V1034 M1736 1038 V1032" stroke="#2b86b8" stroke-width="1.5"/>
 <path d="M1869 1033 L1872 1030 L1875 1033 Z" fill="#aaa"/>
 <path d="M1901 1030 L1910 1025 L1917 1030 V1034 L1908 1039 L1901 1035 Z" fill="#f0f0f0" stroke="#222" stroke-width="1"/>
 <path d="M1901 1030 L1908 1034 L1917 1030 M1908 1034 V1039" fill="none" stroke="#222" stroke-width="1"/>
 <path d="M1905 1029 L1911 1026 L1914 1028 L1908 1031 Z" fill="#bbb"/>
</svg>
</body></html>
